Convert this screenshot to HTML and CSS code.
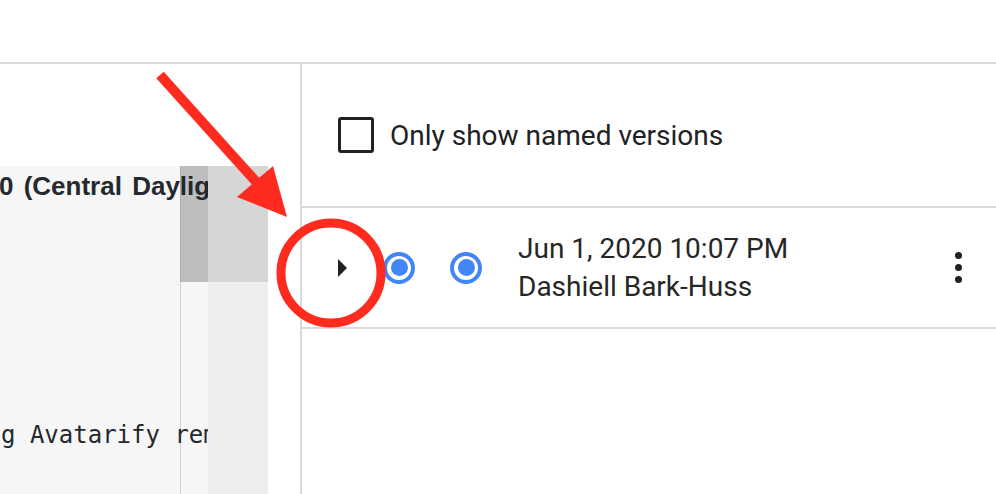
FILE: index.html
```html
<!DOCTYPE html>
<html>
<head>
<meta charset="utf-8">
<link rel="stylesheet" href="styles.css">
</head>
<body>
<div class="page">
  <div class="topbar"></div>
  <div class="main">
    <div class="left">
      <div class="code">
        <div class="cell c-text"></div>
        <div class="cell c-thumb"></div>
        <div class="cell c-track"></div>
        <div class="cell c-text2"></div>
        <div class="cell c-gutter"></div>
        <div class="cell c-side"></div>
        <div class="code-content">
          <div class="heading">0 (Central Daylight Time)</div>
          <div class="mono">g Avatarify remotely</div>
        </div>
      </div>
    </div>
    <div class="right">
      <div class="filter">
        <span class="checkbox"></span>
        <span class="filter-label">Only show named versions</span>
      </div>
      <div class="version">
        <svg class="expand" width="10" height="18" viewBox="0 0 10 18"><path d="M0 0 L9 9 L0 18 Z" fill="#202124"/></svg>
        <span class="radio"><span class="dot"></span></span>
        <span class="radio"><span class="dot"></span></span>
        <div class="meta">
          <div class="date">Jun 1, 2020 10:07 PM</div>
          <div class="author">Dashiell Bark-Huss</div>
        </div>
        <div class="kebab"><span></span><span></span><span></span></div>
      </div>
    </div>
  </div>
  <svg class="annot" width="996" height="494" viewBox="0 0 996 494">
    <line x1="160" y1="75" x2="258" y2="184" stroke="#ff2b1f" stroke-width="10"/>
    <polygon points="237,197 273,166 287,217" fill="#ff2b1f"/>
    <circle cx="331" cy="273" r="50" fill="none" stroke="#ff2b1f" stroke-width="9"/>
  </svg>
</div>
</body>
</html>
```
FILE: styles.css
```css
html, body {
  margin: 0;
  padding: 0;
  background: #ffffff;
}
.page {
  position: relative;
  width: 996px;
  height: 494px;
  overflow: hidden;
  font-family: Roboto, "Liberation Sans", sans-serif;
  color: #202124;
}
.topbar {
  height: 62px;
  border-bottom: 2px solid #dadada;
}
.main {
  display: flex;
  height: 430px;
}
.left {
  width: 302px;
  flex: none;
  border-right: 2px solid #dadada;
  padding-top: 102px;
  box-sizing: border-box;
}
.code {
  display: grid;
  grid-template-columns: 180px 28px 60px;
  grid-template-rows: 116px 1fr;
  height: 328px;
  width: 268px;
}
.c-text { grid-column: 1; grid-row: 1; background: #f6f6f6; }
.c-thumb { grid-column: 2; grid-row: 1; background: #bdbdbd; border-left: 1px solid #acacac; }
.c-track { grid-column: 3; grid-row: 1; background: #d6d6d6; }
.c-text2 { grid-column: 1; grid-row: 2; background: #f6f6f6; }
.c-gutter { grid-column: 2; grid-row: 2; background: #f6f6f6; border-left: 1px solid #d2d2d2; }
.c-side { grid-column: 3; grid-row: 2; background: #eeeeee; }
.code-content {
  grid-column: 1 / 3;
  grid-row: 1 / 3;
  overflow: hidden;
  white-space: nowrap;
  color: #24292e;
  z-index: 1;
}
.heading {
  font-family: "Liberation Sans", Arial, sans-serif;
  font-weight: bold;
  font-size: 26px;
  line-height: 30px;
  padding-top: 5px;
  text-indent: -1px;
  word-spacing: 3px;
}
.mono {
  font-family: "DejaVu Sans Mono", monospace;
  font-size: 24px;
  line-height: 30px;
  margin-top: 219px;
  padding-left: 1px;
}
.right {
  flex: 1;
  display: flex;
  flex-direction: column;
}
.filter {
  height: 142px;
  display: flex;
  align-items: center;
  padding-left: 36px;
  border-bottom: 2px solid #dadada;
}
.checkbox {
  width: 30px;
  height: 30px;
  border: 3px solid #202124;
  border-radius: 3px;
  flex: none;
}
.filter-label {
  margin-left: 16px;
  font-size: 28px;
}
.version {
  height: 119px;
  border-bottom: 2px solid #dadada;
  display: flex;
  align-items: center;
  padding-left: 36px;
}
.expand {
  flex: none;
  margin-right: 35px;
}
.radio {
  width: 32px;
  height: 32px;
  box-sizing: border-box;
  border: 4px solid #4285f4;
  border-radius: 50%;
  display: flex;
  align-items: center;
  justify-content: center;
  margin-right: 35px;
  flex: none;
}
.radio .dot {
  width: 17px;
  height: 17px;
  border-radius: 50%;
  background: #4285f4;
}
.radio + .radio { margin-right: 36px; }
.meta {
  flex: 1;
  font-size: 28px;
  line-height: 38px;
  color: #262626;
}
.kebab {
  display: flex;
  flex-direction: column;
  gap: 5px;
  margin-right: 34px;
}
.kebab span {
  width: 7px;
  height: 7px;
  border-radius: 50%;
  background: #202124;
}
.annot {
  position: absolute;
  left: 0;
  top: 0;
  pointer-events: none;
}
```
